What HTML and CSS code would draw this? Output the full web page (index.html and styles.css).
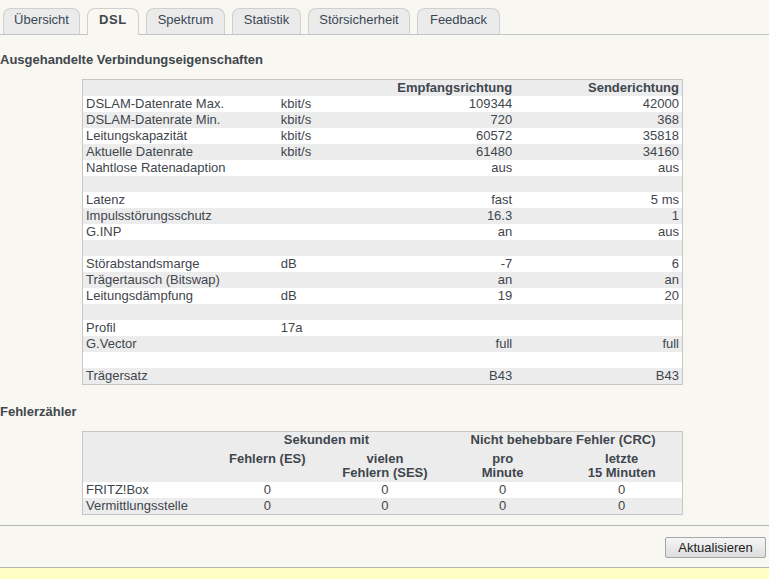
FILE: index.html
```html
<!DOCTYPE html>
<html lang="de">
<head>
<meta charset="utf-8">
<title>DSL-Informationen</title>
<link rel="stylesheet" href="styles.css">
</head>
<body>
<nav class="tabs">
  <a class="tab">Übersicht</a>
  <a class="tab active">DSL</a>
  <a class="tab">Spektrum</a>
  <a class="tab">Statistik</a>
  <a class="tab">Störsicherheit</a>
  <a class="tab">Feedback</a>
</nav>

<h2 class="heading first">Ausgehandelte Verbindungseigenschaften</h2>
<table class="grid props">
  <colgroup><col class="c1"><col class="c2"><col class="c3"><col class="c4"></colgroup>
  <thead>
    <tr><th></th><th></th><th class="r">Empfangsrichtung</th><th class="r">Senderichtung</th></tr>
  </thead>
  <tbody>
    <tr><td>DSLAM-Datenrate Max.</td><td>kbit/s</td><td class="r">109344</td><td class="r">42000</td></tr>
    <tr><td>DSLAM-Datenrate Min.</td><td>kbit/s</td><td class="r">720</td><td class="r">368</td></tr>
    <tr><td>Leitungskapazität</td><td>kbit/s</td><td class="r">60572</td><td class="r">35818</td></tr>
    <tr><td>Aktuelle Datenrate</td><td>kbit/s</td><td class="r">61480</td><td class="r">34160</td></tr>
    <tr><td>Nahtlose Ratenadaption</td><td></td><td class="r">aus</td><td class="r">aus</td></tr>
    <tr><td></td><td></td><td></td><td></td></tr>
    <tr><td>Latenz</td><td></td><td class="r">fast</td><td class="r">5 ms</td></tr>
    <tr><td>Impulsstörungsschutz</td><td></td><td class="r">16.3</td><td class="r">1</td></tr>
    <tr><td>G.INP</td><td></td><td class="r">an</td><td class="r">aus</td></tr>
    <tr><td></td><td></td><td></td><td></td></tr>
    <tr><td>Störabstandsmarge</td><td>dB</td><td class="r">-7</td><td class="r">6</td></tr>
    <tr><td>Trägertausch (Bitswap)</td><td></td><td class="r">an</td><td class="r">an</td></tr>
    <tr><td>Leitungsdämpfung</td><td>dB</td><td class="r">19</td><td class="r">20</td></tr>
    <tr><td></td><td></td><td></td><td></td></tr>
    <tr><td>Profil</td><td>17a</td><td></td><td></td></tr>
    <tr><td>G.Vector</td><td></td><td class="r">full</td><td class="r">full</td></tr>
    <tr><td></td><td></td><td></td><td></td></tr>
    <tr><td>Trägersatz</td><td></td><td class="r">B43</td><td class="r">B43</td></tr>
  </tbody>
</table>

<h2 class="heading second">Fehlerzähler</h2>
<table class="grid errors">
  <colgroup><col class="e1"><col class="e2"><col class="e3"><col class="e4"><col class="e5"></colgroup>
  <thead>
    <tr class="h1"><th></th><th colspan="2">Sekunden mit</th><th colspan="2">Nicht behebbare Fehler (CRC)</th></tr>
    <tr class="h2"><th></th><th>Fehlern (ES)</th><th>vielen<br>Fehlern (SES)</th><th>pro<br>Minute</th><th>letzte<br>15 Minuten</th></tr>
  </thead>
  <tbody>
    <tr><td>FRITZ!Box</td><td class="c">0</td><td class="c">0</td><td class="c">0</td><td class="c">0</td></tr>
    <tr><td>Vermittlungsstelle</td><td class="c">0</td><td class="c">0</td><td class="c">0</td><td class="c">0</td></tr>
  </tbody>
</table>

<div class="actions">
  <button class="btn" type="button">Aktualisieren</button>
</div>
<div class="footer-bar"></div>
</body>
</html>
```

FILE: styles.css
```css
html, body {
  margin: 0;
  padding: 0;
}
body {
  background: #f8f7f2;
  color: #3f464c;
  font-family: "Liberation Sans", Arial, sans-serif;
  font-size: 13px;
  line-height: 16px;
  height: 579px;
  overflow: hidden;
}

.tabs {
  display: flex;
  gap: 7px;
  padding: 8px 0 0 3px;
  border-bottom: 1px solid #c4c6c6;
  height: 26px;
}
.tab {
  display: block;
  box-sizing: border-box;
  height: 26px;
  padding: 3px 0 0;
  text-align: center;
  background: #ebebeb;
  border: 1px solid #cfcfcf;
  border-bottom: none;
  border-radius: 8px 8px 0 0;
  color: #3a4654;
  white-space: nowrap;
}
.tab:nth-child(1) { width: 77px; }
.tab:nth-child(2) { width: 52px; }
.tab:nth-child(3) { width: 79px; }
.tab:nth-child(4) { width: 69px; }
.tab:nth-child(5) { width: 102px; }
.tab:nth-child(6) { width: 83px; }
.tab.active {
  background: #f8f7f2;
  font-weight: bold;
  height: 27px;
  margin-bottom: -1px;
  color: #3f464c;
  letter-spacing: 0.6px;
}

.heading {
  margin: 0;
  font-size: 13px;
  line-height: 16px;
  font-weight: bold;
  color: #3f464c;
}
.heading.first { margin-top: 17px; }
.heading.second { margin-top: 19px; }

.grid {
  margin: 11px 0 0 82px;
  width: 601px;
  border-collapse: collapse;
  table-layout: fixed;
  border: 1px solid #c6c6c6;
}
.grid td, .grid th {
  padding: 0 3px;
  height: 16px;
  line-height: 16px;
  white-space: nowrap;
  overflow: hidden;
  text-align: left;
  font-weight: normal;
}
.grid th { font-weight: bold; }
.grid thead tr { background: #ececec; }
.grid tbody tr:nth-child(odd) { background: #ffffff; }
.grid tbody tr:nth-child(even) { background: #ececec; }
.grid .r { text-align: right; }
.grid .c { text-align: center; }

.props col.c1 { width: 195px; }
.props col.c2 { width: 100px; }
.props col.c3 { width: 137px; }
.props col.c4 { width: 167px; }

.errors col.e1 { width: 126px; }
.errors col.e2 { width: 117px; }
.errors col.e3 { width: 118px; }
.errors col.e4 { width: 117px; }
.errors col.e5 { width: 121px; }
.errors th { text-align: center; }
.errors .h1 th { height: 16px; }
.errors .h2 th {
  vertical-align: top;
  line-height: 14px;
  height: 28px;
  padding-top: 4px;
  padding-bottom: 2px;
}

.actions {
  margin-top: 10px;
  border-top: 1px solid #b2b6b4;
  display: flex;
  justify-content: flex-end;
  padding: 11px 3px 0 0;
  height: 30px;
}
.btn {
  box-sizing: border-box;
  width: 101px;
  height: 21px;
  padding: 0;
  font-family: "Liberation Sans", Arial, sans-serif;
  font-size: 13px;
  color: #222;
  background: linear-gradient(#f6f6f6, #dddddd);
  border: 1px solid #a6a6a6;
  border-radius: 2px;
}

.footer-bar {
  border-top: 1px solid #b2b6b4;
  background: #ffffc4;
  height: 20px;
}
```
